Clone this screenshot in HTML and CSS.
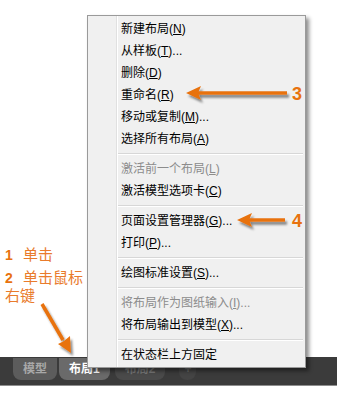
FILE: index.html
```html
<!DOCTYPE html>
<html lang="zh-CN">
<head>
    <meta charset="UTF-8">
    <meta name="viewport" content="width=device-width, initial-scale=1.0">
    <title>布局选项卡菜单</title>
    <link rel="stylesheet" href="styles.css">
</head>
<body>
    <div class="page">
        <div class="canvas"></div>

        <!-- Layout tab bar -->
        <div class="tabbar">
            <div class="tab">模型</div>
            <div class="tab active">布局1</div>
            <div class="tab dim">布局2</div>
            <div class="tab plus">+</div>
        </div>

        <!-- Step labels -->
        <div class="steps">
            <div class="step"><b>1</b> 单击</div>
            <div class="step second"><b>2</b> 单击鼠标</div>
            <div class="step">右键</div>
        </div>

        <!-- Context menu -->
        <ul class="menu">
            <li>新建布局(<u>N</u>)</li>
            <li>从样板(<u>T</u>)...</li>
            <li>删除(<u>D</u>)</li>
            <li>重命名(<u>R</u>)</li>
            <li>移动或复制(<u>M</u>)...</li>
            <li>选择所有布局(<u>A</u>)</li>
            <li class="sep"></li>
            <li class="disabled">激活前一个布局(<u>L</u>)</li>
            <li>激活模型选项卡(<u>C</u>)</li>
            <li class="sep"></li>
            <li>页面设置管理器(<u>G</u>)...</li>
            <li>打印(<u>P</u>)...</li>
            <li class="sep"></li>
            <li>绘图标准设置(<u>S</u>)...</li>
            <li class="sep"></li>
            <li class="disabled">将布局作为图纸输入(<u>I</u>)...</li>
            <li>将布局输出到模型(<u>X</u>)...</li>
            <li class="sep"></li>
            <li>在状态栏上方固定</li>
        </ul>

        <!-- Callout arrows -->
        <svg class="arrows" width="356" height="406" viewBox="0 0 356 406">
            <defs>
                <filter id="shade" x="-20%" y="-20%" width="150%" height="150%">
                    <feDropShadow dx="2" dy="3" stdDeviation="1.2" flood-color="#000" flood-opacity="0.45"/>
                </filter>
            </defs>
            <g filter="url(#shade)" fill="#e8720e" stroke="#e8720e">
                <line x1="287" y1="93" x2="196" y2="93" stroke-width="3.5"/>
                <polygon points="186,93 201,86 198,93 201,100" stroke="none"/>

                <line x1="285" y1="220" x2="247" y2="220" stroke-width="3.5"/>
                <polygon points="237,220 252,213 249,220 252,227" stroke="none"/>

                <line x1="42" y1="304" x2="63" y2="340" stroke-width="3.5"/>
                <polygon points="71,353 58,344 64,341 70,336" stroke="none"/>
            </g>
        </svg>
        <div class="callout c3">3</div>
        <div class="callout c4">4</div>
    </div>
</body>
</html>
```

FILE: styles.css
```css
body {
    margin: 0;
    background: #ffffff;
    font-family: 'Liberation Sans', 'Noto Sans CJK SC', sans-serif;
}

.page {
    position: relative;
    width: 356px;
    height: 406px;
    overflow: hidden;
}

.canvas {
    height: 357px;
}

.tabbar {
    width: 337px;
    height: 29px;
    background: #3b3b3b;
    border-bottom: 1px solid #8e8e8e;
    display: flex;
    align-items: flex-start;
    gap: 2px;
    padding: 1px 0 0 13px;
    box-sizing: border-box;
}

.tab {
    height: 22px;
    line-height: 23px;
    padding: 0 10px;
    background: #5c5c5c;
    color: #a8a8a8;
    font-size: 12px;
    font-weight: bold;
    border-radius: 0 0 8px 8px;
}

.tab.active {
    background: #6a6a6a;
    color: #ffffff;
}

.tab.dim {
    margin-left: 3px;
    background: #4a4a4a;
    color: #767676;
}

.tab.plus {
    margin-left: 12px;
    padding: 0 5px;
    background: #444444;
    color: #666666;
}

.steps {
    position: absolute;
    left: 5px;
    top: 246px;
    color: #e97b2c;
    font-size: 15px;
    line-height: 18px;
}

.steps b {
    margin-right: 6px;
    font-size: 14px;
    color: #e8720e;
}

.step.second {
    margin-top: 5px;
}

.menu {
    position: absolute;
    left: 87px;
    top: 15px;
    width: 217px;
    margin: 0;
    padding: 2px 0 1px;
    list-style: none;
    background: #f0f0f0;
    border: 1px solid #9a9a9a;
    box-shadow: 3px 3px 4px rgba(0, 0, 0, 0.45);
}

.menu::before {
    content: "";
    position: absolute;
    top: 0;
    bottom: 0;
    left: 28px;
    width: 1px;
    background: #e0e0e0;
    border-right: 1px solid #ffffff;
}

.menu li {
    height: 22px;
    line-height: 22px;
    padding-left: 33px;
    font-size: 12px;
    color: #000000;
    white-space: nowrap;
}

.menu li.disabled {
    color: #8c8c8c;
}

.menu li.sep {
    height: 8px;
    padding: 0;
    position: relative;
}

.menu li.sep::after {
    content: "";
    position: absolute;
    left: 30px;
    right: 2px;
    top: 3px;
    height: 1px;
    background: #d7d7d7;
    border-bottom: 1px solid #ffffff;
}

.arrows {
    position: absolute;
    left: 0;
    top: 0;
    pointer-events: none;
}

.callout {
    position: absolute;
    left: 292px;
    color: #e8720e;
    font-size: 18px;
    font-weight: bold;
    line-height: 20px;
}

.c3 {
    top: 84px;
}

.c4 {
    top: 211px;
}
```
